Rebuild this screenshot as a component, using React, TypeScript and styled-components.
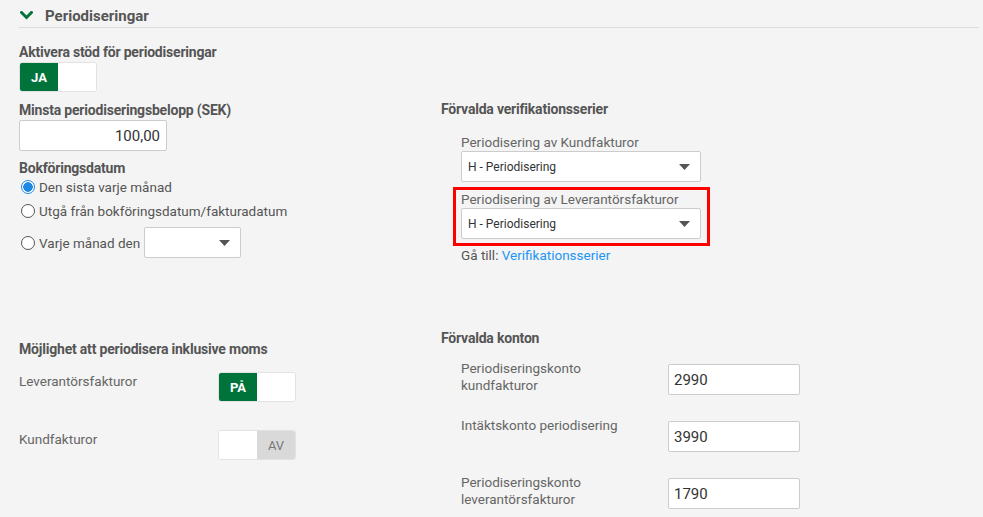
import styled, { createGlobalStyle } from "styled-components"

const GlobalStyle = createGlobalStyle`
  body {
    margin: 0;
    background: #f4f4f4;
    font-family: Roboto, "Liberation Sans", sans-serif;
    color: #555;
  }
`

function Chevron() {
  return (
    <svg width="13" height="9" viewBox="0 0 13 9">
      <polyline points="1.5,1.5 6.5,6.5 11.5,1.5" fill="none" stroke="#00733b" strokeWidth="3" strokeLinecap="square" />
    </svg>
  )
}

function Caret() {
  return (
    <svg width="11" height="6" viewBox="0 0 11 6">
      <polygon points="0,0 11,0 5.5,6" fill="#555" />
    </svg>
  )
}

function Toggle({ on, onText, offText }: { on: boolean, onText: string, offText?: string }) {
  return (
    <ToggleBox>
      <ToggleHalf $active={on}>{on ? onText : ""}</ToggleHalf>
      <ToggleHalf $active={!on && !!offText} $off>{!on ? offText : ""}</ToggleHalf>
    </ToggleBox>
  )
}

function Select({ value, width }: { value: string, width: number }) {
  return (
    <SelectBox style={{ width }}>
      <span>{value}</span>
      <Caret />
    </SelectBox>
  )
}

export default function App() {
  return (
    <Page>
      <GlobalStyle />
      <Header>
        <Chevron />
        <Title>Periodiseringar</Title>
      </Header>

      <Grid>
        <Column>
          <Heading $top={16}>Aktivera stöd för periodiseringar</Heading>
          <Spacer $h={2} />
          <Toggle on onText="JA" />
          <Heading $top={10}>Minsta periodiseringsbelopp (SEK)</Heading>
          <Spacer $h={2} />
          <AmountInput>100,00</AmountInput>
          <Heading $top={9}>Bokföringsdatum</Heading>
          <RadioList>
            <RadioRow>
              <RadioCircle $checked />
              <RadioLabel>Den sista varje månad</RadioLabel>
            </RadioRow>
            <RadioRow>
              <RadioCircle />
              <RadioLabel>Utgå från bokföringsdatum/fakturadatum</RadioLabel>
            </RadioRow>
            <RadioRow $tall>
              <RadioCircle />
              <RadioLabel>Varje månad den</RadioLabel>
              <Select value="" width={97} />
            </RadioRow>
          </RadioList>
        </Column>

        <Column>
          <Heading $top={73}>Förvalda verifikationsserier</Heading>
          <Indent>
            <FieldLabel $top={17}>Periodisering av Kundfakturor</FieldLabel>
            <Select value="H - Periodisering" width={240} />
            <Highlight>
              <FieldLabel $top={1}>Periodisering av Leverantörsfakturor</FieldLabel>
              <Select value="H - Periodisering" width={240} />
            </Highlight>
            <GoTo>Gå till: <Link>Verifikationsserier</Link></GoTo>
          </Indent>
        </Column>

        <Column>
          <Heading $top={78}>Möjlighet att periodisera inklusive moms</Heading>
          <ToggleRows>
            <ToggleRow>
              <RowLabel>Leverantörsfakturor</RowLabel>
              <Toggle on onText="PÅ" />
            </ToggleRow>
            <ToggleRow>
              <RowLabel>Kundfakturor</RowLabel>
              <Toggle on={false} onText="PÅ" offText="AV" />
            </ToggleRow>
          </ToggleRows>
        </Column>

        <Column>
          <Heading $top={67}>Förvalda konton</Heading>
          <AccountRows>
            <AccountRow>
              <AccountLabel>Periodiseringskonto<br />kundfakturor</AccountLabel>
              <AccountInput>2990</AccountInput>
            </AccountRow>
            <AccountRow>
              <AccountLabel>Intäktskonto periodisering</AccountLabel>
              <AccountInput>3990</AccountInput>
            </AccountRow>
            <AccountRow>
              <AccountLabel>Periodiseringskonto<br />leverantörsfakturor</AccountLabel>
              <AccountInput>1790</AccountInput>
            </AccountRow>
          </AccountRows>
        </Column>
      </Grid>
    </Page>
  )
}

const Page = styled.div`
  padding: 0 4px 0 19px;
  height: 517px;
  box-sizing: border-box;
  overflow: hidden;
`

const Header = styled.div`
  display: flex;
  align-items: center;
  gap: 12px;
  height: 28px;
  padding: 4px 0 0 1px;
  border-bottom: 1px solid #dddddd;
  box-sizing: border-box;
`

const Title = styled.div`
  font-size: 15px;
  font-weight: 700;
  color: #555;
  line-height: 18px;
`

const Grid = styled.div`
  display: grid;
  grid-template-columns: 422px 1fr;
`

const Column = styled.div`
  display: flex;
  flex-direction: column;
  align-items: flex-start;
`

const Heading = styled.div<{ $top: number }>`
  margin-top: ${p => p.$top}px;
  font-size: 14px;
  font-weight: 700;
  line-height: 16px;
  color: #555;
  letter-spacing: -0.2px;
`

const Spacer = styled.div<{ $h: number }>`
  height: ${p => p.$h}px;
`

const ToggleBox = styled.div`
  display: flex;
  width: 78px;
  height: 30px;
  border: 1px solid #e2e2e2;
  border-radius: 3px;
  box-sizing: border-box;
  overflow: hidden;
  background: #ffffff;
`

const ToggleHalf = styled.div<{ $active: boolean, $off?: boolean }>`
  flex: 1;
  display: flex;
  align-items: center;
  justify-content: center;
  font-size: 13px;
  font-weight: ${p => (p.$off ? 400 : 700)};
  color: ${p => (p.$off ? "#777" : "#fff")};
  background: ${p => (p.$active ? (p.$off ? "#d9d9d9" : "#00733b") : "#ffffff")};
`

const inputBase = `
  background: #ffffff;
  border: 1px solid #cccccc;
  border-radius: 2px;
  box-sizing: border-box;
  height: 31px;
  font-size: 15px;
  color: #333;
  display: flex;
  align-items: center;
`

const AmountInput = styled.div`
  ${inputBase}
  width: 148px;
  justify-content: flex-end;
  padding-right: 6px;
`

const RadioList = styled.div`
  display: flex;
  flex-direction: column;
  margin-top: 1px;
`

const RadioRow = styled.div<{ $tall?: boolean }>`
  display: flex;
  align-items: center;
  gap: 4px;
  height: ${p => (p.$tall ? 31 : 20)}px;
  margin-top: ${p => (p.$tall ? 6 : 4)}px;
  padding-left: 2px;
  &:first-child {
    margin-top: 0;
  }
`

const RadioCircle = styled.span<{ $checked?: boolean }>`
  width: 14px;
  height: 14px;
  border-radius: 50%;
  box-sizing: border-box;
  border: 1px solid ${p => (p.$checked ? "#1e88e5" : "#555")};
  background: ${p => (p.$checked ? "radial-gradient(circle, #1e88e5 0 4.5px, #fff 5px)" : "#fff")};
  flex-shrink: 0;
`

const RadioLabel = styled.span`
  font-size: 13.5px;
  color: #555;
  line-height: 18px;
`

const SelectBox = styled.div`
  ${inputBase}
  justify-content: space-between;
  padding: 0 10px 0 6px;
  font-size: 12px;
  color: #333;
`

const Indent = styled.div`
  display: flex;
  flex-direction: column;
  align-items: flex-start;
  padding-left: 20px;
`

const FieldLabel = styled.div<{ $top: number }>`
  margin-top: ${p => p.$top}px;
  margin-bottom: 1px;
  font-size: 13.5px;
  line-height: 16px;
  color: #666;
`

const Highlight = styled.div`
  margin: 5px 0 0 -8px;
  border: 3px solid #ff0000;
  padding: 0 6px 4px 5px;
  display: flex;
  flex-direction: column;
`

const GoTo = styled.div`
  font-size: 13.5px;
  line-height: 16px;
  margin-top: 1px;
  color: #555;
`

const Link = styled.span`
  color: #2196f3;
`

const ToggleRows = styled.div`
  display: flex;
  flex-direction: column;
  gap: 28px;
  margin-top: 15px;
`

const ToggleRow = styled.div`
  display: flex;
  align-items: flex-start;
`

const RowLabel = styled.div`
  width: 199px;
  font-size: 13.5px;
  line-height: 16px;
  margin-top: 1px;
  color: #666;
`

const AccountRows = styled.div`
  display: flex;
  flex-direction: column;
  gap: 22px;
  margin-top: 14px;
  padding-left: 20px;
`

const AccountRow = styled.div`
  display: flex;
  align-items: flex-start;
`

const AccountLabel = styled.div`
  width: 207px;
  font-size: 13.5px;
  line-height: 17px;
  color: #666;
`

const AccountInput = styled.div`
  ${inputBase}
  width: 132px;
  margin-top: 4px;
  padding-left: 5px;
`
